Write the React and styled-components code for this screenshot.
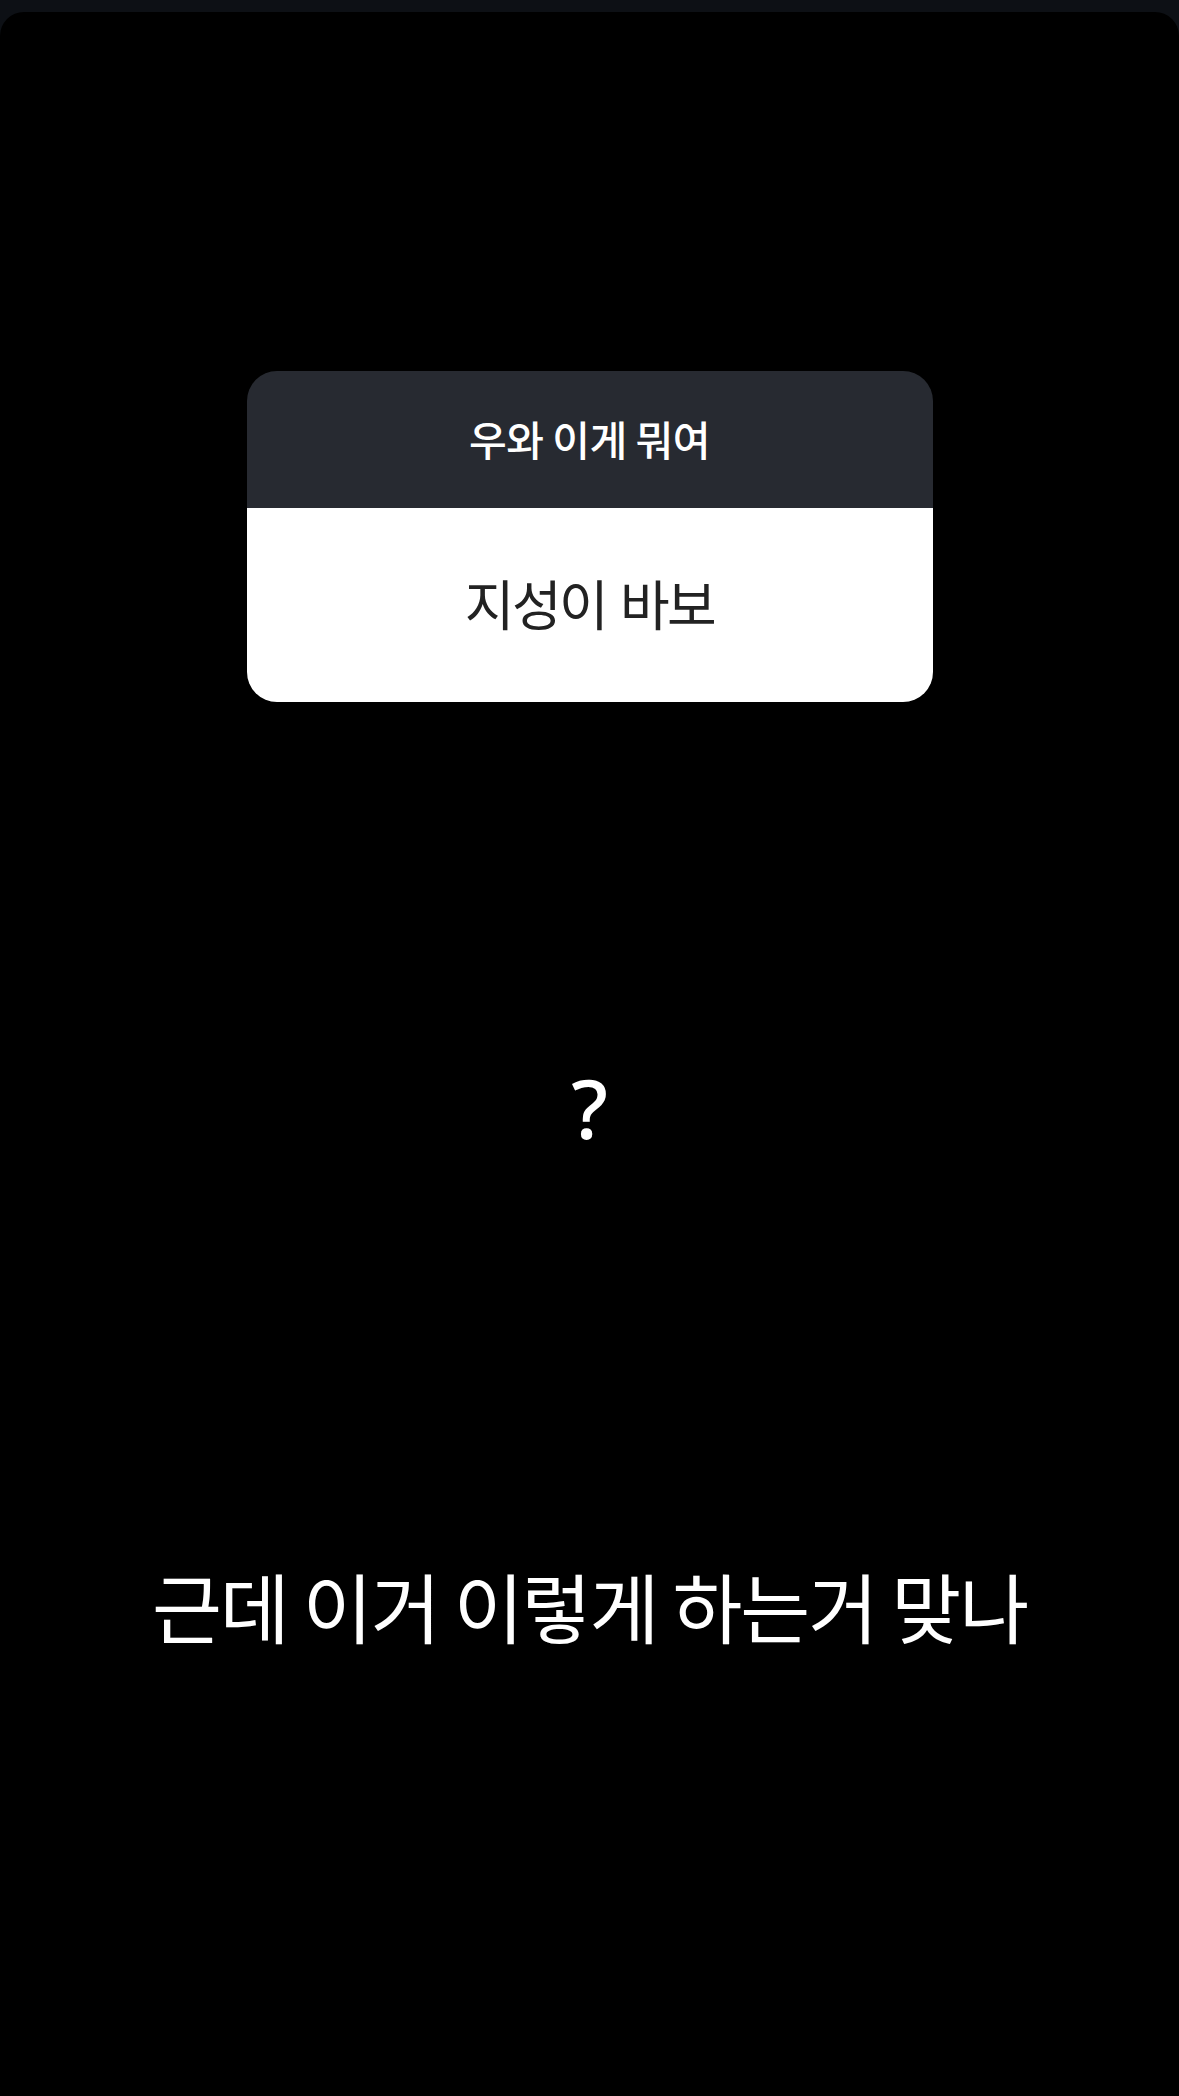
import React from "react";
import styled, { createGlobalStyle } from "styled-components";

const GlobalStyle = createGlobalStyle`
  html, body {
    margin: 0;
    padding: 0;
    background: #0d1015;
  }
  body {
    font-family: "Noto Sans CJK KR", "Noto Sans", sans-serif;
  }
`;

const Screen = styled.div`
  padding-top: 12px;
  width: 1179px;
  height: 2096px;
  box-sizing: border-box;
`;

const Story = styled.div`
  height: 100%;
  background: #000;
  border-radius: 24px 24px 0 0;
  display: flex;
  flex-direction: column;
  align-items: center;
`;

const QuestionCard = styled.div`
  margin-top: 359px;
  width: 686px;
  border-radius: 30px;
  overflow: hidden;
  display: flex;
  flex-direction: column;
`;

const CardHead = styled.div`
  height: 137px;
  background: #272a31;
  color: #fff;
  display: flex;
  align-items: center;
  justify-content: center;
  padding-bottom: 4px;
  box-sizing: border-box;
  font-size: 41px;
  font-weight: 500;
  letter-spacing: -0.5px;
`;

const CardAnswer = styled.div`
  height: 194px;
  background: #fff;
  color: #222;
  display: flex;
  align-items: center;
  justify-content: center;
  padding-bottom: 6px;
  box-sizing: border-box;
  font-size: 54px;
  font-weight: 400;
  letter-spacing: -2.5px;
  word-spacing: 4px;
`;

const Mark = styled.div`
  margin-top: 364px;
  color: #fff;
  font-family: "Noto Sans", sans-serif;
  font-size: 82px;
  font-weight: 500;
  line-height: 1;
`;

const Caption = styled.div`
  margin-top: 419px;
  color: #fff;
  font-size: 76px;
  line-height: 1;
  letter-spacing: -2px;
  white-space: nowrap;
`;

export default function App() {
  return (
    <Screen>
      <GlobalStyle />
      <Story>
        <QuestionCard>
          <CardHead>우와 이게 뭐여</CardHead>
          <CardAnswer>지성이 바보</CardAnswer>
        </QuestionCard>
        <Mark>?</Mark>
        <Caption>근데 이거 이렇게 하는거 맞나</Caption>
      </Story>
    </Screen>
  );
}
